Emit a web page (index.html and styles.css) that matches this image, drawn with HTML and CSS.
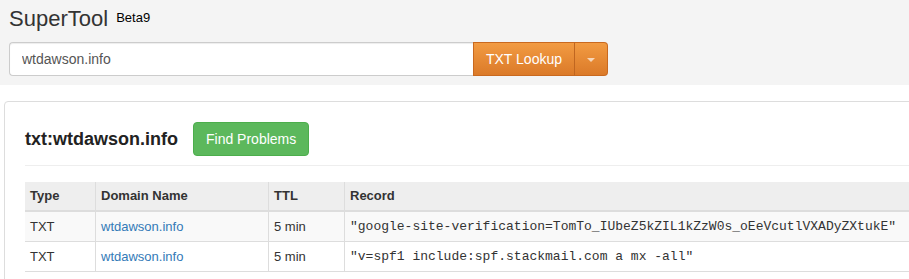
FILE: index.html
```html
<!DOCTYPE html>
<html lang="en">
<head>
    <meta charset="UTF-8">
    <meta name="viewport" content="width=device-width, initial-scale=1.0">
    <title>SuperTool - TXT Lookup</title>
    <link rel="stylesheet" href="styles.css">
</head>
<body>
    <div class="tool-header">
        <h1 class="tool-title">SuperTool <span class="tool-version">Beta9</span></h1>
        <form class="lookup-form">
            <input class="lookup-input" type="text" value="wtdawson.info">
            <button class="btn-lookup" type="button">TXT Lookup</button>
            <button class="btn-lookup btn-toggle" type="button"><span class="caret"></span></button>
        </form>
    </div>

    <div class="result-panel">
        <div class="result-head">
            <h2 class="result-title">txt:wtdawson.info</h2>
            <button class="btn-success" type="button">Find Problems</button>
        </div>
        <hr class="divider">

        <table class="records-table">
            <thead>
                <tr>
                    <th class="col-type">Type</th>
                    <th class="col-domain">Domain Name</th>
                    <th class="col-ttl">TTL</th>
                    <th>Record</th>
                </tr>
            </thead>
            <tbody>
                <tr>
                    <td>TXT</td>
                    <td><a href="#">wtdawson.info</a></td>
                    <td>5 min</td>
                    <td class="record">"google-site-verification=TomTo_IUbeZ5kZIL1kZzW0s_oEeVcutlVXADyZXtukE"</td>
                </tr>
                <tr>
                    <td>TXT</td>
                    <td><a href="#">wtdawson.info</a></td>
                    <td>5 min</td>
                    <td class="record">"v=spf1 include:spf.stackmail.com a mx -all"</td>
                </tr>
            </tbody>
        </table>
    </div>
</body>
</html>
```

FILE: styles.css
```css
:root {
    --text: #333;
    --border: #ddd;
    --link: #337ab7;
    --orange-top: #f29b42;
    --orange-bottom: #db7a29;
    --green: #5cb85c;
}

html,
body {
    overflow: hidden;
}

body {
    margin: 0;
    font-family: "Liberation Sans", Arial, sans-serif;
    font-size: 14px;
    line-height: 20px;
    color: var(--text);
    background: white;
}

.tool-header {
    background-color: #f4f4f4;
    padding: 6px 9px 9px;
}

.tool-title {
    margin: 0 0 11px;
    font-size: 22px;
    line-height: 24px;
    font-weight: normal;
    color: #333;
}

.tool-version {
    font-size: 13px;
    color: #000;
    margin-left: 2px;
    vertical-align: 4px;
}

.lookup-form {
    display: flex;
    width: 599px;
    margin: 0;
}

.lookup-input {
    flex: 1;
    height: 34px;
    box-sizing: border-box;
    padding: 6px 12px;
    border: 1px solid #ccc;
    border-right: 0;
    border-radius: 4px 0 0 4px;
    box-shadow: inset 0 1px 1px rgba(0, 0, 0, 0.075);
    font-family: inherit;
    font-size: 14px;
    color: #555;
    background: white;
}

.btn-lookup {
    height: 34px;
    padding: 6px 12px;
    border: 1px solid #c9691f;
    background: linear-gradient(to bottom, var(--orange-top), var(--orange-bottom));
    color: white;
    font-family: inherit;
    font-size: 14px;
    line-height: 20px;
    cursor: pointer;
}

.btn-toggle {
    width: 34px;
    padding: 0;
    border-left-color: #c06620;
    border-radius: 0 4px 4px 0;
    margin-left: -1px;
}

.caret {
    display: inline-block;
    width: 0;
    height: 0;
    border-top: 4px solid rgba(255, 255, 255, 0.65);
    border-left: 4px solid transparent;
    border-right: 4px solid transparent;
    vertical-align: middle;
}

.result-panel {
    width: 960px;
    margin: 16px 0 0 4px;
    padding: 20px 20px 20px;
    border: 1px solid var(--border);
    border-radius: 4px;
}

.result-head {
    display: flex;
    align-items: center;
    gap: 15px;
}

.result-title {
    margin: 0;
    font-size: 18px;
    font-weight: bold;
    color: #222;
}

.btn-success {
    height: 34px;
    padding: 6px 12px;
    border: 1px solid #4cae4c;
    border-radius: 4px;
    background-color: var(--green);
    color: white;
    font-family: inherit;
    font-size: 14px;
    line-height: 20px;
}

.divider {
    margin: 9px 0 16px;
    border: 0;
    border-top: 1px solid #eee;
}

.records-table {
    width: 100%;
    border-collapse: separate;
    border-spacing: 0;
    table-layout: fixed;
    font-size: 13px;
}

.records-table th,
.records-table td {
    box-sizing: border-box;
    text-align: left;
    padding: 4px 5px;
    line-height: 20px;
    white-space: nowrap;
}

.records-table th + th,
.records-table td + td {
    border-left: 1px solid var(--border);
}

.records-table th {
    background-color: #eee;
    border-bottom: 2px solid var(--border);
    font-weight: bold;
}

.records-table td {
    padding: 5px 5px 4px;
}

.records-table tbody tr + tr td {
    border-top: 1px solid var(--border);
}

.records-table tbody tr:last-child td {
    border-bottom: 1px solid var(--border);
}

.records-table tbody tr:nth-child(odd) {
    background-color: #f9f9f9;
}

.col-type {
    width: 70px;
}

.col-domain {
    width: 173px;
}

.col-ttl {
    width: 76px;
}

.records-table a {
    color: var(--link);
    text-decoration: none;
}

.record {
    font-family: "Liberation Mono", "Courier New", monospace;
    font-size: 13px;
}
```
